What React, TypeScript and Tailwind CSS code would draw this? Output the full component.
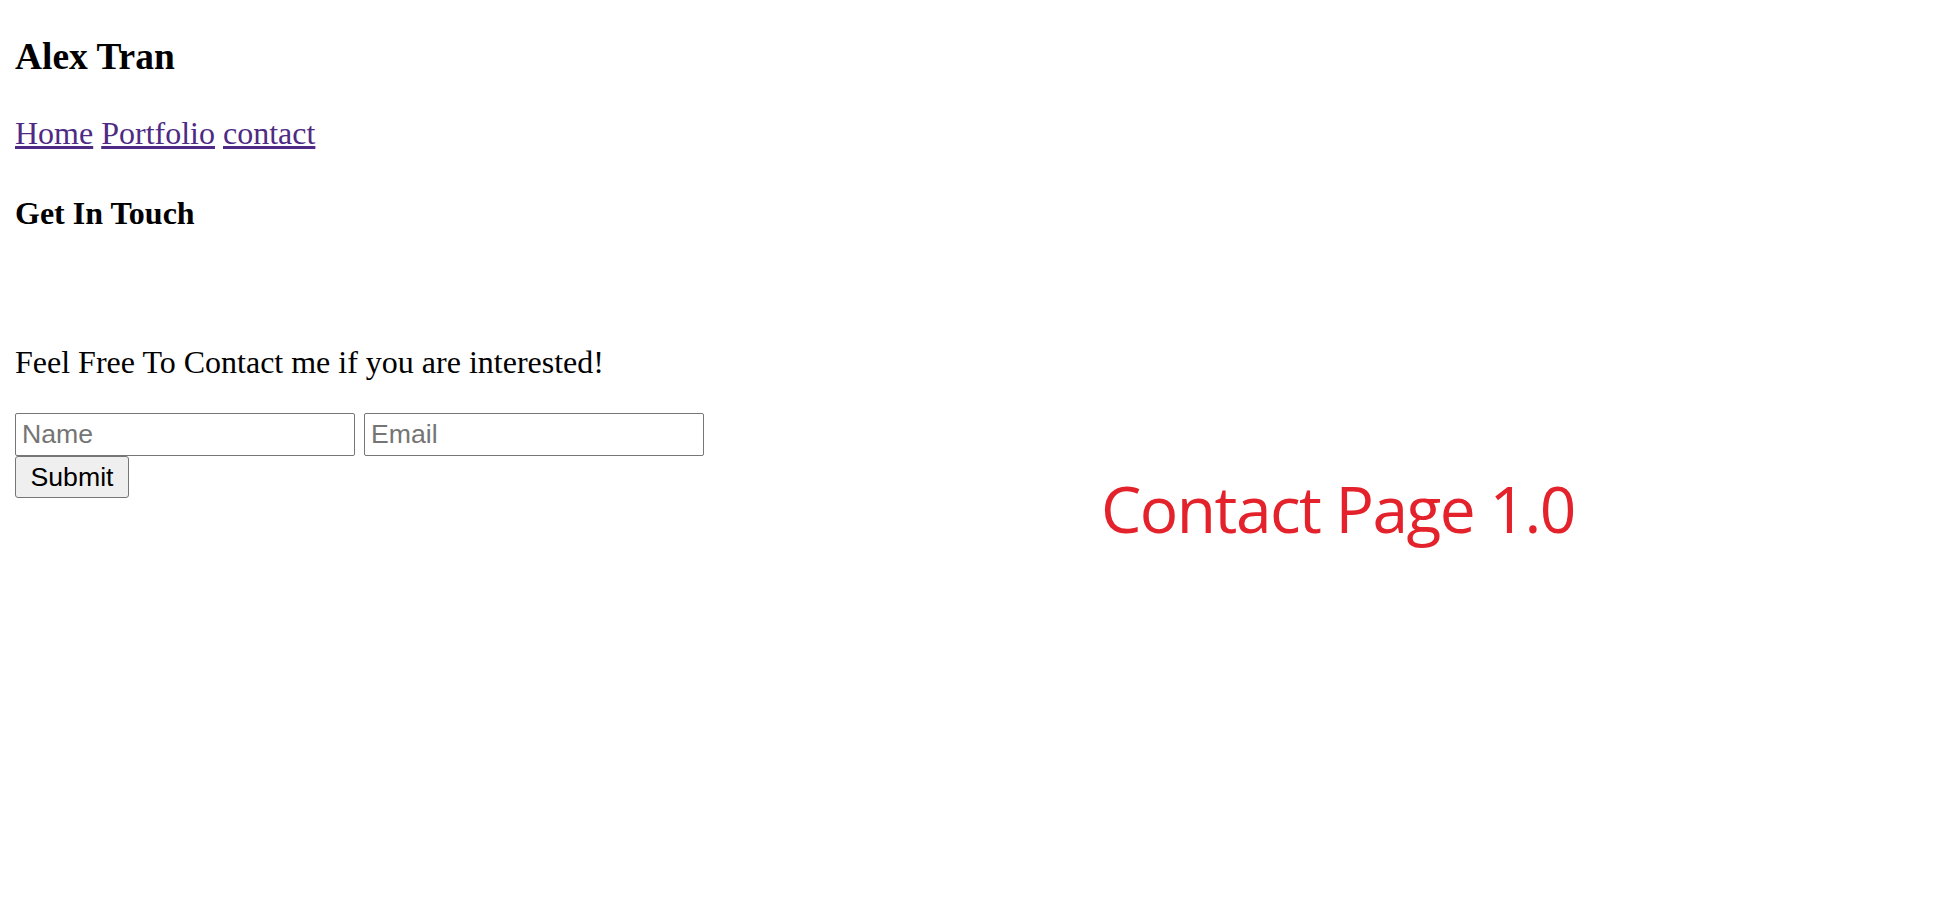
export default function App() {
  return (
    <div className="min-h-screen w-full bg-white flex items-start font-['Liberation_Serif',serif] text-black">
      {/* Left column: page content */}
      <div className="w-[1101px] shrink-0 px-[15px] pt-[35px]">
        <h3 className="text-[37.44px] font-bold leading-[43px]">Alex Tran</h3>

        <nav className="mt-[37.44px] text-[32px] leading-[36.77px]">
          <a href="#" className="text-[#4e2a84] underline">Home</a>{" "}
          <a href="#" className="text-[#4e2a84] underline">Portfolio</a>{" "}
          <a href="#" className="text-[#4e2a84] underline">contact</a>
        </nav>

        <h4 className="mt-[42.56px] text-[32px] font-bold leading-[36.77px]">Get In Touch</h4>

        <p className="mt-[112.6px] text-[32px] leading-[36.77px]">
          Feel Free To Contact me if you are interested!
        </p>

        <form className="mt-[32px] flex flex-col items-start font-['Liberation_Sans',Arial,sans-serif]" onSubmit={(e) => e.preventDefault()}>
          <div className="flex gap-[9px]">
            <input
              type="text"
              placeholder="Name"
              className="w-[340px] h-[43px] border border-[#767676] rounded-[2px] px-[6px] text-[26.67px] text-black placeholder:text-[#757575] outline-none"
            />
            <input
              type="email"
              placeholder="Email"
              className="w-[340px] h-[43px] border border-[#767676] rounded-[2px] px-[6px] text-[26.67px] text-black placeholder:text-[#757575] outline-none"
            />
          </div>
          <button
            type="submit"
            className="w-[114px] h-[42px] bg-[#efefef] border border-[#767676] rounded-[3px] text-[26.67px] text-black leading-none"
          >
            Submit
          </button>
        </form>
      </div>

      {/* Right: version label */}
      <div className="pt-[477px]">
        <div className="text-[64px] leading-[64px] tracking-[-1.5px] text-[#e3222b] font-['Open_Sans',sans-serif] whitespace-nowrap">
          Contact Page 1.0
        </div>
      </div>
    </div>
  );
}
